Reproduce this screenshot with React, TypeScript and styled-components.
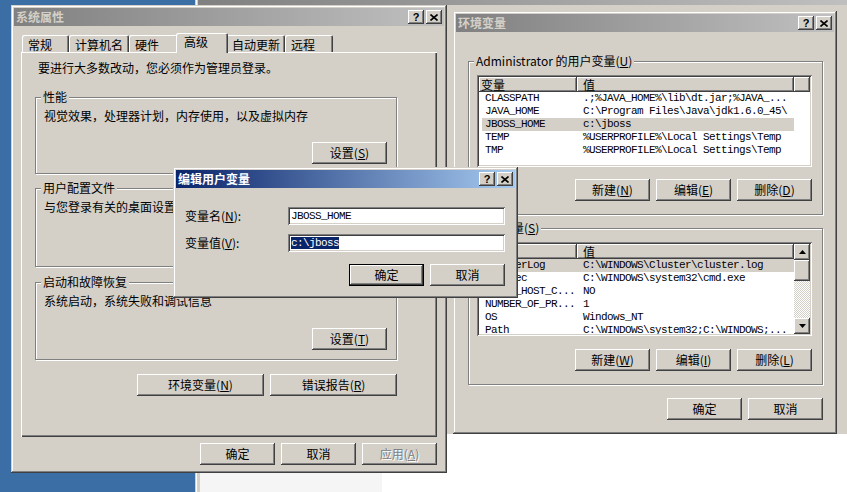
import styled, { createGlobalStyle } from "styled-components";

const FACE = "#d4d0c8";
const raised = `inset -1px -1px #404040, inset 1px 1px #ffffff, inset -2px -2px #808080, inset 2px 2px ${FACE}`;
const sunken = `inset 1px 1px #808080, inset -1px -1px #ffffff, inset 2px 2px #404040, inset -2px -2px ${FACE}`;
const mono = `
  font-family: "Liberation Mono", "DejaVu Sans Mono", monospace;
  font-size: 11px;
  letter-spacing: -0.6px;
`;

const GlobalStyle = createGlobalStyle`
  html, body {
    margin: 0;
    padding: 0;
    background: #3a6ea5;
  }
  #root {
    width: 847px;
    height: 492px;
  }
`;

const Desktop = styled.div`
  position: relative;
  width: 847px;
  height: 492px;
  overflow: hidden;
  background: #3a6ea5;
  font-family: "Noto Sans CJK SC", "Liberation Sans", sans-serif;
  font-size: 12px;
  line-height: 14px;
  color: #000;
`;

const Window = styled.section<{ $x: number; $y: number; $w: number; $h: number }>`
  position: absolute;
  z-index: 0;
  left: ${(p) => p.$x}px;
  top: ${(p) => p.$y}px;
  width: ${(p) => p.$w}px;
  height: ${(p) => p.$h}px;
  box-sizing: border-box;
  padding: 3px;
  display: flex;
  flex-direction: column;
  background: ${FACE};
  box-shadow: inset -1px -1px #404040, inset 1px 1px ${FACE},
    inset -2px -2px #808080, inset 2px 2px #ffffff;
`;

const BackWindow = styled.section`
  position: absolute;
  z-index: 0;
  left: 195px;
  top: -16px;
  right: -10px;
  bottom: -10px;
  padding: 3px;
  display: flex;
  flex-direction: column;
  background: ${FACE};
  box-shadow: inset -1px -1px #404040, inset 1px 1px ${FACE},
    inset -2px -2px #808080, inset 2px 2px #ffffff;
`;

const BackUpper = styled.div`
  flex: none;
  height: 429px;
  background: ${FACE};
`;

const BackLower = styled.div`
  flex: 1;
  display: flex;
  background: #ffffff;
  border-left: 2px solid ${FACE};
`;

const BackPane = styled.div`
  width: 182px;
  background: #f5f5f5;
`;

const TitleBar = styled.header<{ $active?: boolean }>`
  flex: none;
  height: 18px;
  display: flex;
  align-items: center;
  justify-content: space-between;
  padding: 0 2px;
  background: ${(p) =>
    p.$active
      ? "linear-gradient(to right, #0a246a, #a6caf0)"
      : "linear-gradient(to right, #808080, #c0c0c0)"};
`;

const TitleText = styled.span<{ $active?: boolean }>`
  font-weight: 700;
  font-size: 12px;
  line-height: 18px;
  color: ${(p) => (p.$active ? "#ffffff" : FACE)};
`;

const CaptionGroup = styled.div`
  display: flex;
  gap: 2px;
`;

const CaptionButton = styled.div`
  width: 16px;
  height: 14px;
  display: flex;
  align-items: center;
  justify-content: center;
  background: ${FACE};
  box-shadow: ${raised};
  font-family: "Liberation Sans", sans-serif;
  font-weight: 700;
  font-size: 11px;
  line-height: 1;
`;

function Captions() {
  return (
    <CaptionGroup>
      <CaptionButton>?</CaptionButton>
      <CaptionButton>
        <svg width="8" height="7" viewBox="0 0 8 7">
          <path d="M0.5 0.5L7.5 6.5M7.5 0.5L0.5 6.5" stroke="#000" strokeWidth="1.6" />
        </svg>
      </CaptionButton>
    </CaptionGroup>
  );
}

const Button = styled.button<{ $w?: number; $h?: number; $default?: boolean }>`
  width: ${(p) => p.$w ?? 75}px;
  height: ${(p) => p.$h ?? 22}px;
  margin: 0;
  padding: 0;
  border: 0;
  background: ${FACE};
  color: #000;
  font: inherit;
  box-shadow: ${(p) =>
    p.$default
      ? `inset 0 0 0 1px #000, inset -2px -2px #404040, inset 2px 2px #fff, inset -3px -3px #808080`
      : raised};

  &:disabled {
    color: #808080;
    text-shadow: 1px 1px #ffffff;
  }
`;

const ButtonRow = styled.div<{ $mt?: number }>`
  display: flex;
  justify-content: flex-end;
  gap: 6px;
  margin-top: ${(p) => p.$mt ?? 0}px;
`;

/* 系统属性 */
const SysBody = styled.div`
  flex: 1;
  display: flex;
  flex-direction: column;
  padding: 7px 7px 0 7px;
`;

const TabStrip = styled.div`
  display: flex;
  align-items: flex-end;
  height: 19px;
  padding-left: 1px;
`;

const Tab = styled.div<{ $w: number; $selected?: boolean }>`
  position: relative;
  z-index: ${(p) => (p.$selected ? 2 : 1)};
  width: ${(p) => p.$w}px;
  height: ${(p) => (p.$selected ? 20 : 17)}px;
  margin: 0 ${(p) => (p.$selected ? -2 : 0)}px ${(p) => (p.$selected ? -1 : 0)}px;
  box-sizing: border-box;
  padding: ${(p) => (p.$selected ? "2px 0 0 8px" : "3px 0 0 6px")};
  background: ${FACE};
  border-radius: 2px 2px 0 0;
  box-shadow: inset 1px 1px #ffffff, inset -1px 0 #404040, inset -2px 0 #808080;
  white-space: nowrap;
`;

const TabPanel = styled.div`
  position: relative;
  z-index: 1;
  height: 385px;
  box-sizing: border-box;
  padding: 9px 40px 0 14px;
  display: flex;
  flex-direction: column;
  box-shadow: inset 1px 1px #ffffff, inset -1px -1px #404040, inset -2px -2px #808080;
`;

const Intro = styled.div`
  margin-left: 3px;
`;

const Group = styled.div<{ $h: number; $mt: number }>`
  position: relative;
  flex: none;
  height: ${(p) => p.$h}px;
  margin-top: ${(p) => p.$mt}px;
  box-sizing: border-box;
  border: 1px solid #808080;
  box-shadow: inset 1px 1px #ffffff, 1px 1px #ffffff;
  padding: 11px 9px 9px 8px;
  display: flex;
  flex-direction: column;
  justify-content: space-between;
`;

const EnvGroup = styled(Group)`
  padding: 13px 10px 13px 8px;
`;

const GroupLabel = styled.span`
  position: absolute;
  top: -8px;
  left: 5px;
  padding: 0 2px;
  background: ${FACE};
  white-space: nowrap;
`;

const GroupText = styled.div`
  white-space: nowrap;
`;

/* list views */
const ListView = styled.div<{ $h: number }>`
  height: ${(p) => p.$h}px;
  box-sizing: border-box;
  padding: 2px;
  display: flex;
  background: #ffffff;
  box-shadow: ${sunken};
  overflow: hidden;
`;

const ListMain = styled.div`
  flex: 1;
  min-width: 0;
  overflow: hidden;
`;

const HeaderRow = styled.div`
  display: flex;
  height: 15px;
`;

const HeaderCell = styled.div<{ $w: number; $pad: number }>`
  flex: none;
  width: ${(p) => p.$w}px;
  box-sizing: border-box;
  padding-left: ${(p) => p.$pad}px;
  line-height: 15px;
  background: ${FACE};
  box-shadow: inset -1px -1px #404040, inset 1px 1px #ffffff, inset -2px -2px #808080;
`;

const HeaderFill = styled.div`
  flex: 1;
  background: ${FACE};
  box-shadow: inset -1px -1px #404040, inset 1px 1px #ffffff, inset -2px -2px #808080;
`;

const Row = styled.div<{ $selected?: boolean }>`
  display: flex;
  width: 312px;
  height: 13px;
  margin-left: 3px;
  background: ${(p) => (p.$selected ? FACE : "transparent")};
  ${mono}
  line-height: 13px;
  white-space: nowrap;
`;

const Cell = styled.div<{ $w?: number }>`
  flex: ${(p) => (p.$w ? "none" : "1")};
  width: ${(p) => (p.$w ? `${p.$w}px` : "auto")};
  padding-left: 3px;
  overflow: hidden;
`;

const ScrollBar = styled.div`
  flex: none;
  width: 16px;
  display: flex;
  flex-direction: column;
`;

const ScrollButton = styled.div<{ $h: number }>`
  flex: none;
  height: ${(p) => p.$h}px;
  display: flex;
  align-items: center;
  justify-content: center;
  background: ${FACE};
  box-shadow: ${raised};
`;

const ScrollTrack = styled.div`
  flex: 1;
  background: repeating-conic-gradient(${FACE} 0 25%, #ffffff 0 50%) 0 0 / 2px 2px;
`;

/* 编辑用户变量 */
const EditBody = styled.div`
  flex: 1;
  display: flex;
  flex-direction: column;
  padding: 19px 10px 0 9px;
`;

const FieldRow = styled.div<{ $mt?: number }>`
  display: grid;
  grid-template-columns: 103px 1fr;
  align-items: center;
  height: 18px;
  margin-top: ${(p) => p.$mt ?? 0}px;
`;

const TextField = styled.div`
  height: 18px;
  box-sizing: border-box;
  padding: 2px 0 0 3px;
  background: #ffffff;
  box-shadow: ${sunken};
  ${mono}
  line-height: 14px;
`;

const Selected = styled.span`
  background: #0a246a;
  color: #ffffff;
`;

const EnvBody = styled.div`
  flex: 1;
  display: flex;
  flex-direction: column;
  padding: 29px 11px 0 12px;
`;

const tabs = [
  { label: "常规", w: 47 },
  { label: "计算机名", w: 60 },
  { label: "硬件", w: 49 },
  { label: "高级", w: 52, selected: true },
  { label: "自动更新", w: 59 },
  { label: "远程", w: 48 },
];

const userVars = [
  { name: "CLASSPATH", value: ".;%JAVA_HOME%\\lib\\dt.jar;%JAVA_..." },
  { name: "JAVA_HOME", value: "C:\\Program Files\\Java\\jdk1.6.0_45\\" },
  { name: "JBOSS_HOME", value: "c:\\jboss", selected: true },
  { name: "TEMP", value: "%USERPROFILE%\\Local Settings\\Temp" },
  { name: "TMP", value: "%USERPROFILE%\\Local Settings\\Temp" },
];

const systemVars = [
  { name: "ClusterLog", value: "C:\\WINDOWS\\Cluster\\cluster.log", selected: true },
  { name: "ComSpec", value: "C:\\WINDOWS\\system32\\cmd.exe" },
  { name: "FP_NO_HOST_C...", value: "NO" },
  { name: "NUMBER_OF_PR...", value: "1" },
  { name: "OS", value: "Windows_NT" },
  { name: "Path", value: "C:\\WINDOWS\\system32;C:\\WINDOWS;..." },
];

type Variable = { name: string; value: string; selected?: boolean };

function VarRows({ vars }: { vars: Variable[] }) {
  return (
    <>
      {vars.map((v) => (
        <Row key={v.name} $selected={v.selected}>
          <Cell $w={95}>{v.name}</Cell>
          <Cell>{v.value}</Cell>
        </Row>
      ))}
    </>
  );
}

function Header() {
  return (
    <HeaderRow>
      <HeaderCell $w={98} $pad={2}>变量</HeaderCell>
      <HeaderCell $w={217} $pad={6}>值</HeaderCell>
      <HeaderFill />
    </HeaderRow>
  );
}

function Arrow({ up }: { up?: boolean }) {
  return (
    <svg width="7" height="4" viewBox="0 0 7 4">
      <polygon points={up ? "3.5,0 7,4 0,4" : "0,0 7,0 3.5,4"} fill="#000" />
    </svg>
  );
}

export default function App() {
  return (
    <Desktop>
      <GlobalStyle />

      <BackWindow>
        <TitleBar />
        <BackUpper />
        <BackLower>
          <BackPane />
        </BackLower>
      </BackWindow>

      <Window $x={11} $y={5} $w={436} $h={468}>
        <TitleBar>
          <TitleText>系统属性</TitleText>
          <Captions />
        </TitleBar>
        <SysBody>
          <TabStrip>
            {tabs.map((t) => (
              <Tab key={t.label} $w={t.w} $selected={t.selected}>
                {t.label}
              </Tab>
            ))}
          </TabStrip>
          <TabPanel>
            <Intro>要进行大多数改动，您必须作为管理员登录。</Intro>
            <Group $h={77} $mt={22}>
              <GroupLabel>性能</GroupLabel>
              <GroupText>视觉效果，处理器计划，内存使用，以及虚拟内存</GroupText>
              <ButtonRow>
                <Button>设置(<u>S</u>)</Button>
              </ButtonRow>
            </Group>
            <Group $h={79} $mt={14}>
              <GroupLabel>用户配置文件</GroupLabel>
              <GroupText>与您登录有关的桌面设置</GroupText>
              <ButtonRow>
                <Button>设置(<u>E</u>)</Button>
              </ButtonRow>
            </Group>
            <Group $h={78} $mt={15}>
              <GroupLabel>启动和故障恢复</GroupLabel>
              <GroupText>系统启动，系统失败和调试信息</GroupText>
              <ButtonRow>
                <Button>设置(<u>T</u>)</Button>
              </ButtonRow>
            </Group>
            <ButtonRow $mt={14}>
              <Button $w={127}>环境变量(<u>N</u>)</Button>
              <Button $w={127}>错误报告(<u>R</u>)</Button>
            </ButtonRow>
          </TabPanel>
          <ButtonRow $mt={6}>
            <Button>确定</Button>
            <Button>取消</Button>
            <Button disabled>应用(<u>A</u>)</Button>
          </ButtonRow>
        </SysBody>
      </Window>

      <Window $x={453} $y={11} $w={384} $h={423}>
        <TitleBar>
          <TitleText>环境变量</TitleText>
          <Captions />
        </TitleBar>
        <EnvBody>
          <EnvGroup $h={154} $mt={0}>
            <GroupLabel>Administrator 的用户变量(<u>U</u>)</GroupLabel>
            <ListView $h={92}>
              <ListMain>
                <Header />
                <VarRows vars={userVars} />
              </ListMain>
            </ListView>
            <ButtonRow>
              <Button>新建(<u>N</u>)</Button>
              <Button>编辑(<u>E</u>)</Button>
              <Button>删除(<u>D</u>)</Button>
            </ButtonRow>
          </EnvGroup>
          <EnvGroup $h={157} $mt={13}>
            <GroupLabel>系统变量(<u>S</u>)</GroupLabel>
            <ListView $h={94}>
              <ListMain>
                <Header />
                <VarRows vars={systemVars} />
              </ListMain>
              <ScrollBar>
                <ScrollButton $h={16}>
                  <Arrow up />
                </ScrollButton>
                <ScrollButton $h={21} />
                <ScrollTrack />
                <ScrollButton $h={16}>
                  <Arrow />
                </ScrollButton>
              </ScrollBar>
            </ListView>
            <ButtonRow>
              <Button>新建(<u>W</u>)</Button>
              <Button>编辑(<u>I</u>)</Button>
              <Button>删除(<u>L</u>)</Button>
            </ButtonRow>
          </EnvGroup>
          <ButtonRow $mt={13}>
            <Button>确定</Button>
            <Button>取消</Button>
          </ButtonRow>
        </EnvBody>
      </Window>

      <Window $x={173} $y={167} $w={345} $h={131}>
        <TitleBar $active>
          <TitleText $active>编辑用户变量</TitleText>
          <Captions />
        </TitleBar>
        <EditBody>
          <FieldRow>
            <span>变量名(<u>N</u>):</span>
            <TextField>JBOSS_HOME</TextField>
          </FieldRow>
          <FieldRow $mt={9}>
            <span>变量值(<u>V</u>):</span>
            <TextField>
              <Selected>{"c:\\jboss"}</Selected>
            </TextField>
          </FieldRow>
          <ButtonRow $mt={12}>
            <Button $default>确定</Button>
            <Button>取消</Button>
          </ButtonRow>
        </EditBody>
      </Window>
    </Desktop>
  );
}
